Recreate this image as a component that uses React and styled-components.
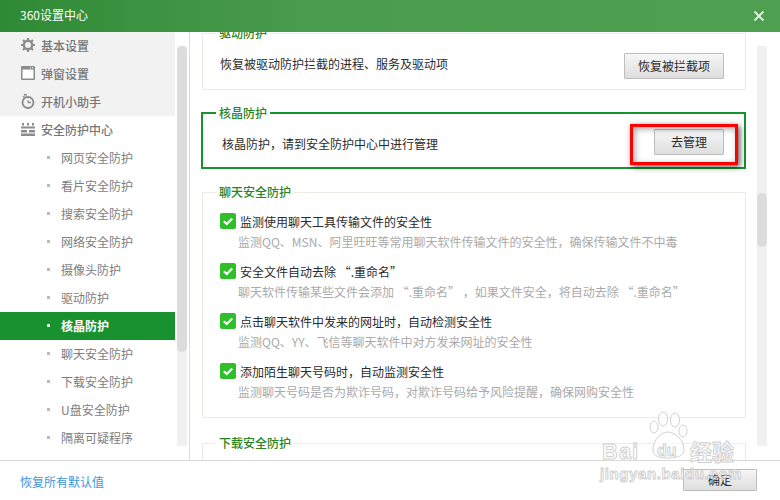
import React from 'react';
import styled, { createGlobalStyle } from 'styled-components';

const Global = createGlobalStyle`
  html, body { margin: 0; padding: 0; background: #fff; }
  * { box-sizing: border-box; }
  body { font-family: "Noto Sans CJK SC", "Noto Sans", sans-serif; font-size: 12px; }
`;

const Win = styled.div`
  position: relative;
  width: 780px;
  height: 500px;
  overflow: hidden;
  display: flex;
  flex-direction: column;
  background: #fff;
`;

const Header = styled.div`
  position: relative;
  z-index: 1;
  height: 32px;
  flex: none;
  display: flex;
  align-items: center;
  justify-content: space-between;
  padding: 0 15px 4px 20px;
  color: #fff;
  background: linear-gradient(90deg, #2f8a35 0%, #4a9c4e 40%, #4f9f50 100%);
`;

const Close = styled.svg`
  width: 12px;
  height: 12px;
  margin-top: 3px;
`;

const Body = styled.div`
  flex: 1;
  display: flex;
  min-height: 0;
`;

const Side = styled.div`
  width: 190px;
  flex: none;
  display: flex;
  border-right: 1px solid #dcdcdc;
`;

const Menu = styled.ul`
  list-style: none;
  margin: 0;
  padding: 0;
  width: 175px;
  height: 414px;
  overflow: hidden;
  flex: none;
`;

const TopItem = styled.li`
  height: 28px;
  display: flex;
  align-items: center;
  gap: 6px;
  padding: 0 0 2px 21px;
  color: #777;
  font-weight: 500;
  background: ${(p) => (p.$shaded ? '#f2f2f2' : 'transparent')};
`;

const SubItem = styled.li`
  height: 28px;
  display: flex;
  align-items: center;
  padding: 0 0 2px 47px;
  color: ${(p) => (p.$active ? '#fff' : '#7d7d7d')};
  font-weight: ${(p) => (p.$active ? 700 : 400)};
  background: ${(p) => (p.$active ? '#18922f' : 'transparent')};
  &::before {
    content: '';
    width: 3px;
    height: 3px;
    margin-right: 11px;
    background: ${(p) => (p.$active ? '#e4f2e4' : '#bbb')};
  }
`;

const Track = styled.div`
  width: 10px;
  height: 400px;
  margin: 14px 0 0 2px;
  background: #f0f0f0;
`;

const Thumb = styled.div`
  height: ${(p) => p.$h}px;
  margin-top: ${(p) => p.$top}px;
  background: #dcdcdc;
  border-radius: 5px;
`;

const Content = styled.div`
  flex: 1;
  display: flex;
  min-width: 0;
  overflow: hidden;
`;

const Panels = styled.div`
  width: 556px;
  flex: none;
  margin-left: 11px;
  margin-top: -7px;
`;

const Panel = styled.fieldset`
  margin: 0 0 ${(p) => p.$mb || 0}px 1px;
  width: 544px;
  padding: 0;
  min-width: 0;
  height: ${(p) => p.$h}px;
  border: 1px solid #ecece6;
`;

const FocusPanel = styled.fieldset`
  position: relative;
  margin: 0 0 15px 0;
  width: 545px;
  height: 64px;
  padding: 0;
  min-width: 0;
  border: 2px solid #18922f;
`;

const Legend = styled.legend`
  margin-left: ${(p) => p.$indent}px;
  padding: 0 3px;
  color: #2a8420;
  font-weight: 500;
  line-height: 16px;
`;

const ActionRow = styled.div`
  display: flex;
  align-items: center;
  justify-content: space-between;
  padding: ${(p) => p.$pad};
  color: #2b2b2b;
`;

const ActionText = styled.span`
  position: relative;
  top: ${(p) => p.$shift}px;
`;

const Btn = styled.button`
  width: ${(p) => p.$w}px;
  height: ${(p) => p.$hgt}px;
  padding: 0 0 2px;
  font: inherit;
  color: #2b2b2b;
  border: 1px solid #bdbdbd;
  border-radius: 1px;
  background: linear-gradient(#f6f6f6, #dedede);
`;

const Mark = styled.div`
  position: absolute;
  top: 3px;
  left: 427px;
  width: 108px;
  height: 41px;
  border: 3px solid #ff0000;
  box-shadow: 2px 2px 6px rgba(0, 0, 0, 0.65), inset 2px 2px 6px rgba(0, 0, 0, 0.35);
  pointer-events: none;
`;

const Options = styled.div`
  padding: 12px 0 0 17px;
`;

const Option = styled.div`
  height: 50px;
`;

const OptionHead = styled.div`
  display: flex;
  align-items: center;
  gap: 4px;
  height: 18px;
  color: #2b2b2b;
`;

const OptionDesc = styled.div`
  margin: 3px 0 0 18px;
  line-height: 18px;
  color: #aaa;
`;

const Check = styled.svg`
  width: 16px;
  height: 16px;
  flex: none;
`;

const PageBar = styled.div`
  width: 10px;
  height: 400px;
  margin: 14px 0 0 0;
  background: #f0f0f0;
`;

const Footer = styled.div`
  height: 40px;
  flex: none;
  display: flex;
  align-items: flex-start;
  justify-content: space-between;
  padding: 8px 23px 0 20px;
  border-top: 1px solid #d8d8d8;
`;

const ResetLink = styled.a`
  color: #3a96dd;
  line-height: 24px;
  margin-top: 1px;
`;

const Watermark = styled.div`
  position: absolute;
  left: 595px;
  top: 410px;
  width: 150px;
  height: 80px;
  pointer-events: none;
`;

const Paw = styled.svg`
  position: absolute;
  left: 54px;
  top: 0;
  width: 42px;
  height: 50px;
`;

const WmWord = styled.div`
  position: absolute;
  left: ${(p) => p.$x}px;
  top: ${(p) => p.$y}px;
  font: 700 ${(p) => p.$size}px/1 ${(p) => (p.$cjk ? '"Noto Sans CJK SC"' : '"Liberation Sans"')}, sans-serif;
  letter-spacing: ${(p) => p.$track || 0}px;
  color: rgba(255, 255, 255, 0.55);
  -webkit-text-stroke: 1px rgba(200, 200, 200, 0.85);
`;

const GearIcon = () => (
  <svg width="14" height="14" viewBox="0 0 14 14">
    <circle cx="7" cy="7" r="4.2" fill="none" stroke="#8c8c8c" strokeWidth="2.4" />
    <path d="M7 0v2.5M7 11.5V14M0 7h2.5M11.5 7H14M2 2l1.8 1.8M10.2 10.2L12 12M12 2l-1.8 1.8M3.8 10.2L2 12" stroke="#8c8c8c" strokeWidth="2" />
  </svg>
);

const WindowIcon = () => (
  <svg width="14" height="14" viewBox="0 0 14 14">
    <rect x="0" y="0" width="14" height="14" rx="1" fill="#8c8c8c" />
    <rect x="1.5" y="3.5" width="11" height="9" fill="#fff" />
    <rect x="9" y="1.2" width="1" height="1" fill="#fff" />
    <rect x="11" y="1.2" width="1" height="1" fill="#fff" />
  </svg>
);

const TimerIcon = () => (
  <svg width="14" height="15" viewBox="0 0 14 15">
    <circle cx="7" cy="8.5" r="5.5" fill="none" stroke="#8c8c8c" strokeWidth="1.8" />
    <path d="M3 0.8h3M2 3.2L3.5 2" stroke="#8c8c8c" strokeWidth="1.4" />
    <path d="M7 8.5h3M7 6.2v2.3" stroke="#8c8c8c" strokeWidth="1.4" />
  </svg>
);

const WallIcon = () => (
  <svg width="14" height="13" viewBox="0 0 14 13" fill="#8c8c8c">
    <rect x="1" y="0" width="2" height="2.5" />
    <rect x="6" y="0" width="2" height="2.5" />
    <rect x="11" y="0" width="2" height="2.5" />
    <rect x="0" y="3.5" width="14" height="2" />
    <rect x="0" y="7" width="6" height="2.5" />
    <rect x="8" y="7" width="6" height="2.5" />
    <rect x="0" y="10.5" width="14" height="2.5" />
  </svg>
);

const CheckMark = () => (
  <Check viewBox="0 0 16 16">
    <rect width="16" height="16" rx="2" fill="#2fbf2a" />
    <path d="M3.8 8.2l3 2.8 5.4-5.6" fill="none" stroke="#fff" strokeWidth="2.2" />
  </Check>
);

const subMenu = ['网页安全防护', '看片安全防护', '搜索安全防护', '网络安全防护', '摄像头防护', '驱动防护', '核晶防护', '聊天安全防护', '下载安全防护', 'U盘安全防护', '隔离可疑程序'];

const options = [
  ['监测使用聊天工具传输文件的安全性', '监测QQ、MSN、阿里旺旺等常用聊天软件传输文件的安全性，确保传输文件不中毒'],
  ['安全文件自动去除 “.重命名”', '聊天软件传输某些文件会添加 “.重命名” ，如果文件安全，将自动去除 “.重命名”'],
  ['点击聊天软件中发来的网址时，自动检测安全性', '监测QQ、YY、飞信等聊天软件中对方发来网址的安全性'],
  ['添加陌生聊天号码时，自动监测安全性', '监测聊天号码是否为欺诈号码，对欺诈号码给予风险提醒，确保网购安全性'],
];

export default function App() {
  return (
    <Win>
      <Global />
      <Header>
        <span>360设置中心</span>
        <Close viewBox="0 0 12 12">
          <path d="M1.5 1.5l9 9M10.5 1.5l-9 9" stroke="#e8f2e8" strokeWidth="1.8" />
        </Close>
      </Header>
      <Body>
        <Side>
          <Menu>
            <TopItem $shaded><GearIcon />基本设置</TopItem>
            <TopItem $shaded><WindowIcon />弹窗设置</TopItem>
            <TopItem $shaded><TimerIcon />开机小助手</TopItem>
            <TopItem><WallIcon />安全防护中心</TopItem>
            {subMenu.map((name) => (
              <SubItem key={name} $active={name === '核晶防护'}>{name}</SubItem>
            ))}
          </Menu>
          <Track><Thumb $top={0} $h={306} /></Track>
        </Side>
        <Content>
          <Panels>
            <Panel $h={65} $mb={15}>
              <Legend $indent={13}>驱动防护</Legend>
              <ActionRow $pad="12px 21px 0 17px">
                <ActionText $shift={-3}>恢复被驱动防护拦截的进程、服务及驱动项</ActionText>
                <Btn $w={100} $hgt={26}>恢复被拦截项</Btn>
              </ActionRow>
            </Panel>
            <FocusPanel>
              <Legend $indent={13}>核晶防护</Legend>
              <Mark />
              <ActionRow $pad="8px 20px 0 19px">
                <ActionText $shift={1}>核晶防护，请到安全防护中心中进行管理</ActionText>
                <Btn $w={70} $hgt={26}>去管理</Btn>
              </ActionRow>
            </FocusPanel>
            <Panel $h={234} $mb={17}>
              <Legend $indent={13}>聊天安全防护</Legend>
              <Options>
                {options.map(([head, desc]) => (
                  <Option key={head}>
                    <OptionHead><CheckMark />{head}</OptionHead>
                    <OptionDesc>{desc}</OptionDesc>
                  </Option>
                ))}
              </Options>
            </Panel>
            <Panel $h={60}>
              <Legend $indent={13}>下载安全防护</Legend>
            </Panel>
          </Panels>
          <PageBar><Thumb $top={147} $h={54} /></PageBar>
        </Content>
      </Body>
      <Footer>
        <ResetLink>恢复所有默认值</ResetLink>
        <Btn $w={74} $hgt={22}>确定</Btn>
      </Footer>
      <Watermark>
        <Paw viewBox="0 0 42 50" fill="rgba(255,255,255,.55)" stroke="rgba(200,200,200,.85)" strokeWidth="1">
          <ellipse cx="5" cy="17" rx="4" ry="6" />
          <ellipse cx="14" cy="9" rx="4.5" ry="7" />
          <ellipse cx="26" cy="10" rx="4.5" ry="7" />
          <ellipse cx="34" cy="21" rx="4" ry="6" />
          <path d="M4 40c0-11 9-18 15-18s16 7 16 18c0 6-7 8-16 8s-15-2-15-8z" />
        </Paw>
        <WmWord $x={7} $y={31} $size={22} $track={1}>Bai</WmWord>
        <WmWord $x={62} $y={33} $size={16}>du</WmWord>
        <WmWord $x={95} $y={29} $size={22} $cjk>经验</WmWord>
        <WmWord $x={5} $y={56} $size={15} $track={0.6}>jingyan.baidu.com</WmWord>
      </Watermark>
    </Win>
  );
}
